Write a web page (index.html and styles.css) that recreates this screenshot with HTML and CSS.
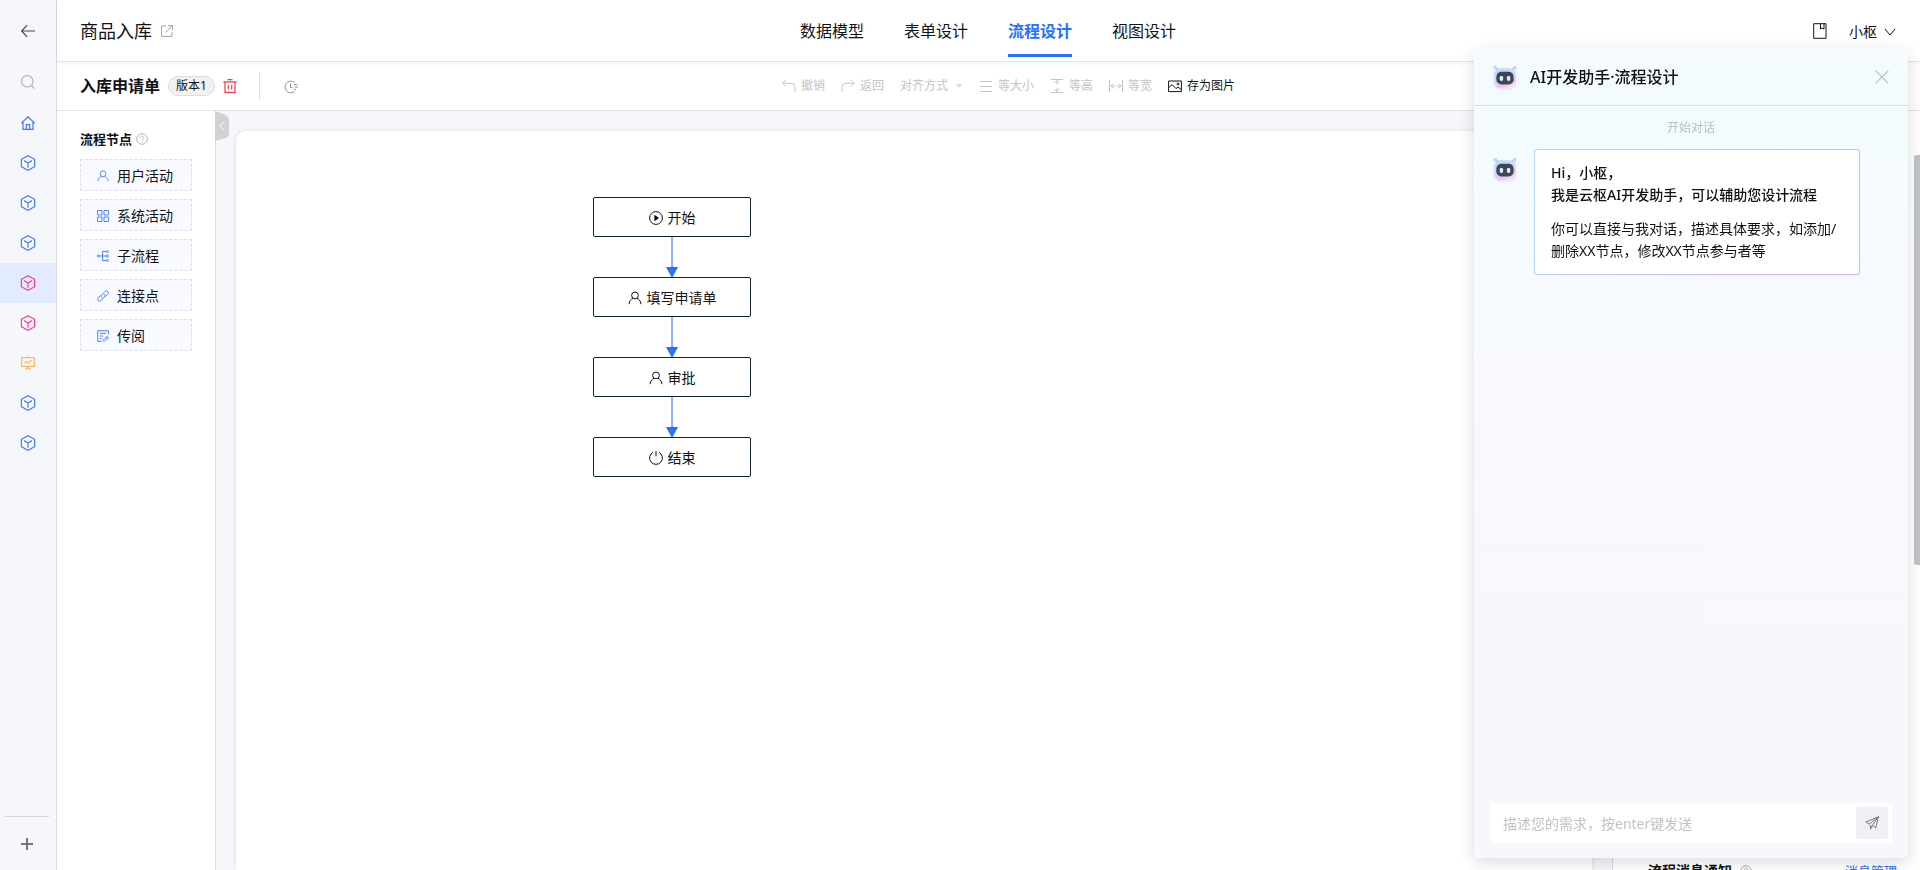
FILE: index.html
```html
<!DOCTYPE html>
<html lang="zh-CN">
<head>
<meta charset="utf-8">
<title>流程设计</title>
<link rel="stylesheet" href="styles.css">
</head>
<body>
<svg class="defs" width="0" height="0" aria-hidden="true">
  <defs>
    <linearGradient id="shell" x1="0.3" y1="0" x2="0.7" y2="1">
      <stop offset="0" stop-color="#b9d9f8"/>
      <stop offset="0.5" stop-color="#d3dcfa"/>
      <stop offset="0.75" stop-color="#ecc4f1"/>
      <stop offset="1" stop-color="#f1eee6"/>
    </linearGradient>
    <symbol id="cube" viewBox="0 0 16 16"><path d="M8 .8 14.6 4.3V11.7L8 15.2 1.4 11.7V4.3ZM4 5.6 8 8 12 5.6M8 8V12.8"/></symbol>
    <symbol id="user" viewBox="0 0 14 14"><circle cx="7" cy="4.4" r="3.4"/><path d="M1 13.2C1.2 10 3.2 7.8 5.2 7.4M13 13.2C12.8 10 10.8 7.8 8.8 7.4"/></symbol>
    <symbol id="help" viewBox="0 0 14 14"><circle cx="7" cy="7" r="6.2"/><path d="M5 5.6C5 2.9 9 2.9 9 5.4 9 7 7 6.9 7 8.6M7 9.8V11"/></symbol>
    <symbol id="bot" viewBox="0 0 26 26">
      <path d="M3 3 6 6M23 3 20 6" stroke="#b7cdef" stroke-width="2"/>
      <circle cx="2.4" cy="2.6" r="1.8" fill="#bfd6f6" stroke="none"/><circle cx="23.6" cy="2.6" r="1.8" fill="#bfd6f6" stroke="none"/>
      <rect x="1.2" y="3.5" width="23.6" height="22" rx="7.5" fill="url(#shell)" stroke="none"/>
      <rect x="3.6" y="7.2" width="18.8" height="14" rx="5.5" fill="#414557" stroke="none"/>
      <rect x="7.3" y="11.8" width="3.6" height="5.4" rx="1.6" fill="#d9f0fc" stroke="none"/><rect x="15.1" y="11.8" width="3.6" height="5.4" rx="1.6" fill="#d9f0fc" stroke="none"/>
    </symbol>
  </defs>
</svg>
<div class="app">
  <nav class="rail" aria-label="主导航">
    <button class="rail-back" aria-label="返回"><svg class="i14" viewBox="0 0 14 14"><path d="M14 7H.7M6.2 1.2.6 7 6.2 12.8"/></svg></button>
    <button class="rail-search" aria-label="搜索"><svg class="i14" viewBox="0 0 14 14"><circle cx="6.3" cy="6.3" r="5.7"/><path d="M10.5 10.5 13.6 13.6"/></svg></button>
    <a class="rail-item blue" href="#" aria-label="首页"><svg class="i14" viewBox="0 0 14 14"><path d="M.3 7.2 7 .8 13.7 7.2M2 5.8V13.3H12V5.8M5.3 13V8.6H8.7V13"/></svg></a>
    <a class="rail-item blue" href="#" aria-label="模块一"><svg class="i16"><use href="#cube"/></svg></a>
    <a class="rail-item blue" href="#" aria-label="模块二"><svg class="i16"><use href="#cube"/></svg></a>
    <a class="rail-item blue" href="#" aria-label="模块三"><svg class="i16"><use href="#cube"/></svg></a>
    <a class="rail-item pink active" href="#" aria-label="模块四"><svg class="i16"><use href="#cube"/></svg></a>
    <a class="rail-item pink" href="#" aria-label="模块五"><svg class="i16"><use href="#cube"/></svg></a>
    <a class="rail-item orange" href="#" aria-label="报表"><svg class="i14" viewBox="0 0 14 14"><path d="M.7 1.7H13.3V10.3H.7ZM7 .3V1.7M7 10.3V12M4.3 13.6 7 11.4 9.7 13.6M3.3 7.5 5.5 5.6 7.2 7 10.6 4"/></svg></a>
    <a class="rail-item blue" href="#" aria-label="模块六"><svg class="i16"><use href="#cube"/></svg></a>
    <a class="rail-item blue" href="#" aria-label="模块七"><svg class="i16"><use href="#cube"/></svg></a>
    <div class="rail-foot"><button aria-label="添加"><svg class="plus" viewBox="0 0 12 12"><path d="M6 0V12M0 6H12"/></svg></button></div>
  </nav>
  <div class="main">
    <header class="top">
      <div class="top-side">
        <span class="title">商品入库</span>
        <a class="muted" href="#" aria-label="打开"><svg class="i12" viewBox="0 0 12 12"><path d="M5 1H.6V11.4H11V7M7 .6H11.4V5M11.4.6 4.6 7.4"/></svg></a>
      </div>
      <nav class="tabs" aria-label="设计">
        <a href="#">数据模型</a><a href="#">表单设计</a><a class="on" href="#">流程设计</a><a href="#">视图设计</a>
      </nav>
      <div class="top-side end">
        <button aria-label="文档"><svg class="doc" viewBox="0 0 14 16"><path d="M.7.7H13V15.3H.7ZM7.5.7V6L9.2 5 11 6V.7"/></svg></button>
        <button class="account">小枢<svg class="chev" viewBox="0 0 12 8"><path d="M.8 .8 6 7 11.2 .8"/></svg></button>
      </div>
    </header>
    <div class="toolbar">
      <div class="form-name">
        <strong>入库申请单</strong>
        <span class="version">版本1</span>
        <button class="trash" aria-label="删除"><svg class="i14" viewBox="0 0 14 14"><path d="M.3 2.8H13.7M4.5.6H9.5M2 2.8V13.4H12V2.8M5.3 6V10.5M8.7 6V10.5"/></svg></button>
        <span class="rule"></span>
        <button class="clock" aria-label="历史"><svg class="i14" viewBox="0 0 14 14"><path d="M10.6 2.6A5.8 5.8 0 1 0 10.6 11.4M6.5 3.6V7.6H8.6M10 4.6H13.5M10.5 7H14M10 9.4H12"/></svg></button>
      </div>
      <div class="tools">
        <button disabled><svg class="i14" viewBox="0 0 14 14"><path d="M4 1 .8 4.3 4 7.6M.8 4.3H9Q13 4.3 13 8.3V13"/></svg>撤销</button>
        <button disabled><svg class="i14" viewBox="0 0 14 14"><path d="M10 1 13.2 4.3 10 7.6M13.2 4.3H5Q1 4.3 1 8.3V13"/></svg>返回</button>
        <button disabled class="align">对齐方式<svg class="caret" viewBox="0 0 8 4"><path d="M.5 0H7.5L4 4Z"/></svg></button>
        <button disabled><svg class="i14" viewBox="0 0 14 14"><path d="M1 2.5H13M1 7.5H13M1 12.5H13"/></svg>等大小</button>
        <button disabled><svg class="i14" viewBox="0 0 14 14"><path d="M1 .5H13M1 13.5H13M7 1.5V5.5M7 8.5V12.5M4.6 4 7 1.5 9.4 4M4.6 10 7 12.5 9.4 10"/></svg>等高</button>
        <button disabled><svg class="i14" viewBox="0 0 14 14"><path d="M.5 1V13M13.5 1V13M2 7H6M8 7H12M4.3 4.6 2 7 4.3 9.4M9.7 4.6 12 7 9.7 9.4"/></svg>等宽</button>
        <button><svg class="i14" viewBox="0 0 14 14"><path d="M.6 2H13.4V12.6H.6ZM.8 8.5 4 5.6 8 9.6 10 8 13.2 10.6"/><circle cx="10" cy="5" r="1"/></svg>存为图片</button>
      </div>
    </div>
    <div class="work">
      <section class="palette">
        <h2>流程节点<svg class="i12"><use href="#help"/></svg></h2>
        <button class="piece"><svg class="i12"><use href="#user"/></svg>用户活动</button>
        <button class="piece"><svg class="i12" viewBox="0 0 12 12"><path d="M.6.6H5V5H.6ZM7 .6H11.4V5H7ZM.6 7H5V11.4H.6ZM7 7H11.4V11.4H7Z"/></svg>系统活动</button>
        <button class="piece"><svg class="i12" viewBox="0 0 12 12"><path d="M2.4 6H9M9 1.5H5.5V10.5H9"/><circle cx="1.3" cy="6" r="1"/><circle cx="10.4" cy="1.6" r="1"/><circle cx="10.4" cy="6" r="1"/><circle cx="10.4" cy="10.4" r="1"/></svg>子流程</button>
        <button class="piece"><svg class="i12" viewBox="0 0 12 12"><path d="M5 7.8C3.8 6.8 4 5.6 4.8 4.8L7.8 1.6C9.8-.2 12.4 2 10.8 4.2L8.4 6.6M7 4.2C8.2 5.2 8 6.4 7.2 7.2L4.2 10.4C2.2 12.2-.4 10 1.2 7.8L3.6 5.4"/></svg>连接点</button>
        <button class="piece"><svg class="i12" viewBox="0 0 12 12"><path d="M11.4 4.5V.8H.8V11.4H4.5M3 3.4H9M3 6H6M3 8.6H4.6M7.4 8.8 9 7.2C10.4 6 12 7.4 10.8 8.8L9.8 9.8M10 8.4 8.4 10.4C7 12 5 10.6 6.4 9"/></svg>传阅</button>
      </section>
      <section class="stage">
        <button class="fold" aria-label="收起"><svg viewBox="0 0 6 10" width="6" height="10"><path d="M5.5.5 1 5 5.5 9.5"/></svg></button>
        <div class="canvas">
          <div class="flow">
            <div class="node"><svg class="i14" viewBox="0 0 14 14"><circle cx="7" cy="7" r="6.4"/><path class="solid" d="M5.4 3.8 10 7 5.4 10.2Z"/></svg>开始</div>
            <svg class="link" viewBox="0 0 12 40"><path class="wire" d="M6 0V31"/><path class="tip" d="M0 30H12L6 41Z"/></svg>
            <div class="node"><svg class="i14"><use href="#user"/></svg>填写申请单</div>
            <svg class="link" viewBox="0 0 12 40"><path class="wire" d="M6 0V31"/><path class="tip" d="M0 30H12L6 41Z"/></svg>
            <div class="node"><svg class="i14"><use href="#user"/></svg>审批</div>
            <svg class="link" viewBox="0 0 12 40"><path class="wire" d="M6 0V31"/><path class="tip" d="M0 30H12L6 41Z"/></svg>
            <div class="node"><svg class="i14" viewBox="0 0 14 14"><path d="M4.2 1.2A6.4 6.4 0 1 0 9.8 1.2M7 0V5.4"/></svg>结束</div>
          </div>
        </div>
      </section>
      <aside class="props">
        <div class="props-row"><strong>流程消息通知</strong><svg class="i12"><use href="#help"/></svg><a href="#">消息管理</a></div>
      </aside>
    </div>
  </div>
</div>
<div class="thumb"></div>
<section class="chat" aria-label="AI开发助手">
  <header class="chat-head"><svg class="bot"><use href="#bot"/></svg><h2>AI开发助手·流程设计</h2><button aria-label="关闭"><svg class="i14" viewBox="0 0 14 14"><path d="M.7.7 13.3 13.3M13.3.7.7 13.3"/></svg></button></header>
  <div class="chat-body">
    <p class="begin">开始对话</p>
    <div class="msg">
      <svg class="bot"><use href="#bot"/></svg>
      <div class="bubble">
        <p class="hello">Hi，小枢，<br>我是云枢AI开发助手，可以辅助您设计流程</p>
        <p>你可以直接与我对话，描述具体要求，如添加/删除XX节点，修改XX节点参与者等</p>
      </div>
    </div>
  </div>
  <form class="ask">
    <input type="text" aria-label="描述您的需求" placeholder="描述您的需求，按enter键发送">
    <button type="button" aria-label="发送"><svg class="i14" viewBox="0 0 14 14"><path d="M13.4.8.8 6 4 8.2 13.4.8 10.8 11.6 7.2 9.6 5.6 13.2 5.2 9M7.2 9.6 13.4.8"/></svg></button>
  </form>
</section>
</body>
</html>
```
FILE: styles.css
```css
* { box-sizing: border-box; }
body {
  margin: 0;
  height: 100vh;
  overflow: hidden;
  font: 14px/22px "Noto Sans", "Noto Sans CJK SC", sans-serif;
  color: #111218;
  background: #fff;
}
h2, p { margin: 0; }
a { color: inherit; text-decoration: none; }
button { font: inherit; color: inherit; background: none; border: 0; padding: 0; display: flex; align-items: center; }
svg { fill: none; stroke: currentColor; stroke-width: 1; flex: none; display: block; }
.defs { position: absolute; }
.i12 { width: 12px; height: 12px; }
.i14 { width: 14px; height: 14px; }
.i16 { width: 16px; height: 16px; }
.app { display: flex; height: 100vh; }

.rail { width: 57px; flex: none; display: flex; flex-direction: column; background: #f6f7fa; border-right: 1px solid #d9dadd; }
.rail button, .rail-item { justify-content: center; }
.rail svg { stroke-width: 1.2; }
.rail-back { height: 62px; color: #4a4c52; }
.rail-search { height: 40px; margin-bottom: 1px; color: #b5b7bd; }
.rail-item { display: flex; align-items: center; height: 40px; }
.rail-item.active { background: #e3ecff; }
.blue { color: #4377ff; }
.pink { color: #f23d98; }
.orange { color: #ffb860; }
.rail-foot { margin: auto 7px 0 5px; height: 54px; border-top: 1px solid #d5d6d9; }
.rail-foot button { width: 100%; height: 54px; color: #77787c; }
.rail .plus { width: 12px; height: 12px; stroke-width: 2; }

.main { flex: 1; min-width: 0; display: flex; flex-direction: column; }
.top { height: 62px; flex: none; display: flex; padding: 0 24px 0 23px; border-bottom: 1px solid #e4e4e5; box-shadow: 0 2px 4px #0000000a; z-index: 1; }
.top-side { flex: 1; display: flex; align-items: center; gap: 9px; }
.top-side.end { justify-content: flex-end; gap: 22px; }
.title { font-size: 18px; }
.muted { color: #a0a1a5; }
.doc { width: 14px; height: 16px; stroke: #1b0b35; }
.account { gap: 7px; padding-top: 2px; }
.chev { width: 12px; height: 8px; }
.tabs { display: flex; gap: 40px; font-size: 16px; }
.tabs a { height: 57px; padding-top: 6px; line-height: 51px; }
.tabs .on { color: #2970ff; font-weight: 600; border-bottom: 3px solid #2970ff; }

.toolbar { height: 49px; flex: none; display: flex; align-items: center; border-bottom: 1px solid #e2e2e3; }
.form-name { flex: none; width: 725px; padding-left: 23px; display: flex; align-items: center; }
.form-name strong { font-size: 16px; font-weight: 600; }
.version { height: 20px; margin-left: 8px; padding: 0 7px; border: 1px solid #dcdcdc; border-radius: 10px; background: #f1f1f1; font-size: 12px; line-height: 18px; }
.trash { margin-left: 8px; color: #f5384a; }
.trash svg { stroke-width: 1.2; }
.rule { width: 1px; height: 28px; margin-left: 22px; background: #dddde0; }
.clock { margin-left: 24px; padding-top: 2px; color: #8e9095; }
.tools { display: flex; gap: 16px; font-size: 12px; }
.tools button { gap: 5px; }
.tools button:disabled { color: #c3c4c6; }
.tools .align { gap: 7px; }
.caret { width: 8px; height: 4px; fill: #dedede; stroke: none; }

.work { flex: 1; min-height: 0; display: flex; }
.palette { width: 159px; flex: none; padding: 16px 23px; border-right: 1px solid #dddde0; display: flex; flex-direction: column; gap: 8px; }
.palette h2 { display: flex; align-items: center; gap: 4px; height: 24px; padding-bottom: 1px; font-size: 13px; font-weight: 600; }
.palette h2 svg { color: #a5a6aa; }
.piece { height: 32px; padding: 2px 0 0 16px; gap: 8px; border: 1px dashed #dbe1ec; background: #f8faff; }
.piece svg { color: #4b80f8; }
.stage { position: relative; flex: 1; padding: 20px 20px 0; display: flex; background: #f6f7fa; }
.fold { position: absolute; left: -1px; top: 0; width: 14px; height: 30px; justify-content: center; background: #d2d2d2; color: #fff; clip-path: polygon(0 0, 11px 4px, 14px 7px, 14px 24px, 11px 27px, 0 30px); }
.canvas { flex: 1; padding: 66px 0 0 357px; background: #fff; border-radius: 10px 10px 0 0; box-shadow: 0 0 4px #0000001f; }
.flow { width: 158px; display: flex; flex-direction: column; align-items: center; }
.node { width: 100%; height: 40px; padding-top: 2px; display: flex; align-items: center; justify-content: center; gap: 5px; border: 1px solid #0b2534; border-radius: 2px; background: #fff; }
.solid { fill: #000; stroke: none; }
.link { width: 12px; height: 40px; overflow: visible; }
.wire { stroke: #8fb2ff; stroke-width: 2; }
.tip { fill: #2970ff; stroke: none; }
.props { width: 308px; flex: none; padding: 0 23px 0 35px; border-left: 1px solid #d9dadd; display: flex; flex-direction: column; justify-content: flex-end; overflow: hidden; background: #fff; }
.props-row { display: flex; align-items: center; margin-bottom: -12px; }
.props-row strong { font-weight: 600; }
.props-row svg { margin-left: 8px; color: #9a9ca0; }
.props-row a { margin-left: auto; font-size: 13px; color: #2970ff; }

.thumb { position: fixed; right: 0; top: 155px; width: 6px; height: 410px; border-radius: 3px 0 0 3px; background: #c1c2c4; }

.chat { position: fixed; top: 49px; right: 12px; bottom: 12px; width: 434px; z-index: 2; display: flex; flex-direction: column; border-radius: 6px; background: linear-gradient(#f3fbff, #f6faff 30%, #f9f6fe 75%); box-shadow: 0 4px 16px #00000026; }
.chat-head { height: 57px; padding: 0 19px 1px; display: flex; align-items: center; gap: 13px; border-bottom: 1px solid #d9dfe6; }
.chat-head h2 { font-size: 16px; font-weight: 500; }
.chat-head button { margin-left: auto; color: #b8bcc0; }
.chat-head button svg { stroke-width: 1.2; }
.bot { width: 24px; height: 24px; filter: drop-shadow(0 1px 1px #8f9fd540); }
.chat-body { flex: 1; padding: 11px 19px; }
.begin { text-align: center; font-size: 12px; color: #b9bdc3; }
.msg { display: flex; align-items: flex-start; gap: 17px; margin-top: 10px; }
.msg .bot { margin-top: 8px; }
.bubble { width: 326px; padding: 12px 16px; border: 1px solid transparent; border-radius: 3px; background: linear-gradient(#fff, #fff) padding-box, linear-gradient(120deg, #addcff, #c4c0ff 50%, #dfadff) border-box; }
.hello { margin-bottom: 12px; font-weight: 500; }
.ask { display: flex; align-items: center; height: 40px; margin: 0 16px 15px; padding-right: 4px; border-radius: 2px; background: #fff; }
.ask input { flex: 1; min-width: 0; height: 100%; padding: 0 13px; border: 0; outline: 0; background: none; font: inherit; }
.ask input::placeholder { color: #c1c2c4; }
.ask button { width: 32px; height: 32px; justify-content: center; border-radius: 2px; background: #eff0f4; color: #777a80; }
```
